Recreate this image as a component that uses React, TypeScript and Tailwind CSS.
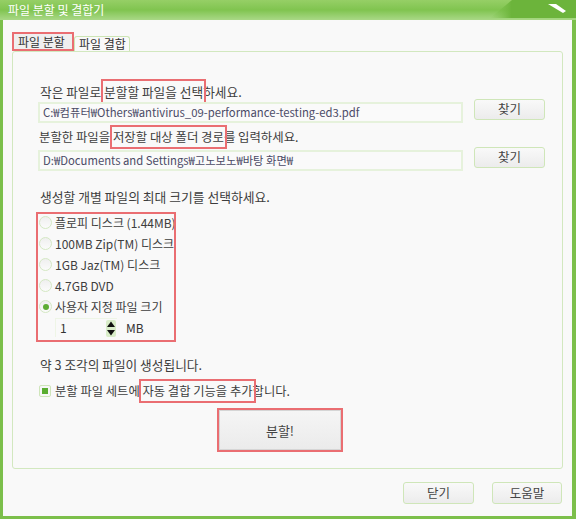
import React from 'react';

function Radio({ checked }: { checked?: boolean }) {
  return (
    <span className="flex h-[13px] w-[13px] shrink-0 items-center justify-center rounded-full border border-[#d4e8c3] bg-gradient-to-b from-[#efefef] to-[#fbfbfb]">
      {checked && <span className="h-[6px] w-[6px] rounded-full bg-[#5dad33]" />}
    </span>
  );
}

function Btn({ label, w = 'w-[71px]', h = 'h-[21px]' }: { label: string; w?: string; h?: string }) {
  return (
    <div
      className={`${w} ${h} flex shrink-0 items-center justify-center rounded-[3px] border border-[#cfe6b9] bg-gradient-to-b from-[#f9f9f9] to-[#ececec] text-[12.5px] leading-none text-[#444]`}
    >
      {label}
    </div>
  );
}

export default function App() {
  return (
    <div className="flex h-[519px] w-[576px] flex-col bg-[#7cbf4b] font-['Noto_Sans_CJK_KR','Noto_Sans',sans-serif] text-[#3d3d3d]">
      {/* title bar */}
      <div className="relative h-[20px] shrink-0 bg-gradient-to-b from-[#96cf66] via-[#80c44f] to-[#a9d886]">
        <svg className="absolute left-0 top-0" width="576" height="20" viewBox="0 0 576 20">
          <defs>
            <linearGradient id="dk" x1="0" y1="0" x2="1" y2="0">
              <stop offset="0" stopColor="#80c44f" stopOpacity="0" />
              <stop offset="0.25" stopColor="#6cb43b" />
              <stop offset="1" stopColor="#6cb43b" />
            </linearGradient>
          </defs>
          <polygon points="490,18 512,0 576,0 576,18" fill="url(#dk)" />
          <polygon points="548,4 556,4 566,11 563,13" fill="#ffffff" />
        </svg>
        <span className="relative block pl-[8px] text-[12px] leading-[20px] text-white">파일 분할 및 결합기</span>
      </div>

      {/* body */}
      <div className="mb-[3px] ml-[3px] mr-[4px] flex flex-1 flex-col bg-[#f9f9f9] px-[9px] pt-[12px]">
        {/* tabs */}
        <div className="flex h-[19px] items-end">
          <div className="flex h-[19px] w-[62px] items-center border-2 border-[#ea6e72] bg-[#efefef] pl-[4px] text-[12px] leading-none text-[#333]">
            파일 분할
          </div>
          <div className="flex h-[15px] w-[56px] items-center rounded-t-[3px] border border-b-0 border-[#cde5b5] bg-[#f9f9f9] pl-[4px] text-[12px] leading-none text-[#333]">
            파일 결합
          </div>
        </div>

        {/* panel */}
        <div className="flex h-[418px] flex-col rounded-[3px] border border-[#d2e8bf] bg-[#f9f9f9] pl-[25px]">
          <div className="ml-[2px] mt-[33px] h-[14px] whitespace-nowrap text-[12.7px] leading-[14px]">
            작은 파일로{' '}
            <span className="outline-2 outline-offset-1 outline-[#ea6e72]">분할할 파일을 선택</span>하세요.
          </div>
          <div className="flex items-start">
            <div className="mt-[3px] flex h-[21px] w-[425px] items-center whitespace-nowrap border-2 border-[#e6f2dc] bg-[#fafafa] pl-[3px] text-[11.3px] leading-none text-[#4a4a66]">
              C:₩컴퓨터₩Others₩antivirus_09-performance-testing-ed3.pdf
            </div>
            <div className="ml-[11px]">
              <Btn label="찾기" />
            </div>
          </div>

          <div className="ml-[1px] mt-[7px] h-[14px] whitespace-nowrap text-[12.4px] leading-[14px]">
            분할한 파일을{' '}
            <span className="outline-2 outline-offset-1 outline-[#ea6e72]">저장할 대상 폴더 경로</span>를 입력하세요.
          </div>
          <div className="mt-[3px] flex items-start">
            <div className="mt-[3px] flex h-[21px] w-[425px] items-center whitespace-nowrap border-2 border-[#e6f2dc] bg-[#fafafa] pl-[3px] text-[11.3px] leading-none text-[#4a4a66]">
              D:₩Documents and Settings₩고노보노₩바탕 화면₩
            </div>
            <div className="ml-[11px]">
              <Btn label="찾기" />
            </div>
          </div>

          <div className="ml-[2px] mt-[19px] h-[14px] whitespace-nowrap text-[12.8px] leading-[14px]">
            생성할 개별 파일의 최대 크기를 선택하세요.
          </div>

          {/* radio group */}
          <div className="-ml-[2px] mt-[8px] flex h-[130px] w-[140px] flex-col overflow-hidden border-2 border-[#ea6e72]">
            <div className="-mt-[2px] flex flex-col">
              {['플로피 디스크 (1.44MB)', '100MB Zip(TM) 디스크', '1GB Jaz(TM) 디스크', '4.7GB DVD', '사용자 지정 파일 크기'].map(
                (t, i) => (
                  <div key={t} className="flex h-[21px] items-center pl-[1px]">
                    <Radio checked={i === 4} />
                    <span className="ml-[3px] whitespace-nowrap text-[12px] leading-none">{t}</span>
                  </div>
                )
              )}
              <div className="flex h-[21px] items-center pl-[17px]">
                <div className="flex h-[19px] w-[62px] items-center justify-between border-l border-t border-[#eef5e6] pl-[4px] pr-[1px]">
                  <span className="text-[12px] leading-none text-[#333]">1</span>
                  <svg width="10" height="17" viewBox="0 0 10 17">
                    <rect x="0" y="0" width="10" height="17" rx="2" fill="#d9edc9" />
                    <polygon points="5,1.5 9,7 1,7" fill="#111" />
                    <polygon points="1,10 9,10 5,15.5" fill="#111" />
                  </svg>
                </div>
                <span className="ml-[9px] text-[12px] leading-none text-[#333]">MB</span>
              </div>
            </div>
          </div>

          <div className="ml-[2px] mt-[16px] h-[14px] whitespace-nowrap text-[12.7px] leading-[14px]">
            약 3 조각의 파일이 생성됩니다.
          </div>

          <div className="ml-[1px] mt-[12px] flex h-[14px] items-center">
            <span className="flex h-[12px] w-[12px] items-center justify-center rounded-[2px] border border-[#cfe5ba] bg-[#f7f7f7]">
              <span className="h-[6px] w-[6px] bg-[#5aad31]" />
            </span>
            <span className="ml-[4px] whitespace-nowrap text-[12.3px] leading-[14px]">
              분할 파일 세트에{' '}
              <span className="outline-2 outline-offset-1 outline-[#ea6e72]">자동 결합 기능을 추가</span>합니다.
            </span>
          </div>

          <div className="ml-[179px] mt-[10px] flex h-[44px] w-[126px] border-2 border-[#ea6e72]">
            <div className="flex flex-1 items-center justify-center border border-[#d5d5d5] bg-gradient-to-b from-[#f5f5f5] to-[#ebebeb] text-[13px] leading-none text-[#444]">
              분할!
            </div>
          </div>
        </div>

        {/* bottom buttons */}
        <div className="mt-[13px] flex justify-end gap-[18px] pr-[1px]">
          <Btn label="닫기" h="h-[22px]" />
          <Btn label="도움말" w="w-[70px]" h="h-[22px]" />
        </div>
      </div>
    </div>
  );
}
